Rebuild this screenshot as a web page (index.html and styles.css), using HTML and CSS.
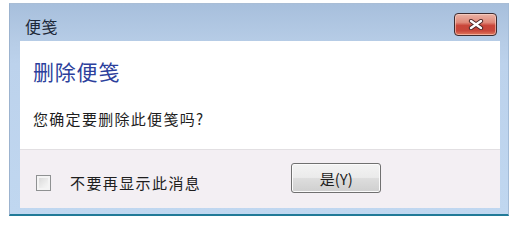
FILE: index.html
```html
<!DOCTYPE html>
<html lang="zh-CN">
<head>
<meta charset="utf-8">
<title>便笺</title>
<link rel="stylesheet" href="styles.css">
</head>
<body>
<div class="window">
  <div class="titlebar">
    <span class="title">便笺</span>
    <button class="close" aria-label="关闭">
      <svg width="16" height="11" viewBox="0 0 16 11">
        <path d="M3 2 L13 9 M13 2 L3 9" stroke="#4a2424" stroke-width="4.2" stroke-linecap="round"/>
        <path d="M3 2 L13 9 M13 2 L3 9" stroke="#ffffff" stroke-width="2.4" stroke-linecap="round"/>
      </svg>
    </button>
  </div>
  <div class="client">
    <div class="main">
      <div class="instruction">删除便笺</div>
      <div class="message">您确定要删除此便笺吗?</div>
    </div>
    <div class="footer">
      <label class="verify">
        <span class="checkbox"></span>
        <span class="verify-text">不要再显示此消息</span>
      </label>
      <button class="btn">是(Y)</button>
    </div>
  </div>
</div>
</body>
</html>
```

FILE: styles.css
```css
html, body {
  margin: 0;
  padding: 0;
  background: #ffffff;
}

body {
  width: 513px;
  height: 218px;
  overflow: hidden;
  font-family: "Noto Sans CJK SC", "Noto Sans", sans-serif;
}

.window {
  margin: 3px 0 0 9px;
  width: 500px;
  height: 213px;
  box-sizing: border-box;
  border-left: 1px solid #9cb3cf;
  border-top: 1px solid #a9bdd5;
  border-right: 1px solid #a3bbd6;
  border-bottom: 2px solid #217a98;
  background: linear-gradient(to bottom, #a7bfdc 0px, #b6cce6 37px, #bcd2ec 60px, #c0d7f0 100%);
  display: flex;
  flex-direction: column;
}

.titlebar {
  height: 37px;
  display: flex;
  align-items: flex-start;
  justify-content: space-between;
  padding: 0 11px 0 15px;
  box-sizing: border-box;
}

.title {
  margin-top: 11px;
  font-size: 16px;
  line-height: 22px;
  color: #1c2838;
  letter-spacing: 0.5px;
}

.close {
  margin-top: 9px;
  width: 43px;
  height: 23px;
  padding: 0;
  border: 1px solid #3e2c30;
  border-radius: 4px;
  background: linear-gradient(to bottom, #eab3a6 0%, #e08a7a 40%, #c9463a 55%, #c8473b 80%, #e07a5e 100%);
  box-shadow: inset 0 0 0 1px rgba(255, 220, 210, 0.55);
  display: flex;
  align-items: center;
  justify-content: center;
}

.close svg {
  display: block;
}

.client {
  margin: 0 8px 0 10px;
  flex: 0 0 167px;
  display: flex;
  flex-direction: column;
  background: #ffffff;
}

.main {
  flex: 0 0 108px;
  padding: 16px 0 0 13px;
  box-sizing: border-box;
}

.instruction {
  font-size: 21px;
  line-height: 28px;
  color: #2c3f9c;
  letter-spacing: 0.8px;
}

.message {
  margin-top: 24px;
  font-size: 15px;
  line-height: 20px;
  color: #1e1e1e;
  letter-spacing: 1.3px;
}

.footer {
  flex: 1;
  border-top: 1px solid #e2dfe2;
  background: #f3eff3;
  display: flex;
  align-items: flex-start;
  padding: 13px 0 0 16px;
}

.verify {
  display: flex;
  align-items: center;
  margin-top: 11px;
}

.checkbox {
  width: 13px;
  height: 14px;
  border: 1px solid #8f9192;
  background: linear-gradient(135deg, #d4d4d4 0%, #eeeeee 60%, #fafafa 100%);
  box-shadow: inset 0 0 0 2px #f4f4f4;
}

.verify-text {
  margin-left: 19px;
  font-size: 15px;
  line-height: 18px;
  color: #1e1e1e;
  letter-spacing: 1.4px;
}

.btn {
  margin-left: 90px;
  width: 90px;
  height: 30px;
  padding: 0;
  border: 1px solid #707070;
  border-radius: 3px;
  background: linear-gradient(to bottom, #f3f3f3 0%, #ebebeb 48%, #dddddd 52%, #cfcfcf 100%);
  box-shadow: inset 0 0 0 1px #fbfbfb;
  font-family: "Noto Sans CJK SC", "Noto Sans", sans-serif;
  font-size: 15px;
  color: #1e1e1e;
}
```
